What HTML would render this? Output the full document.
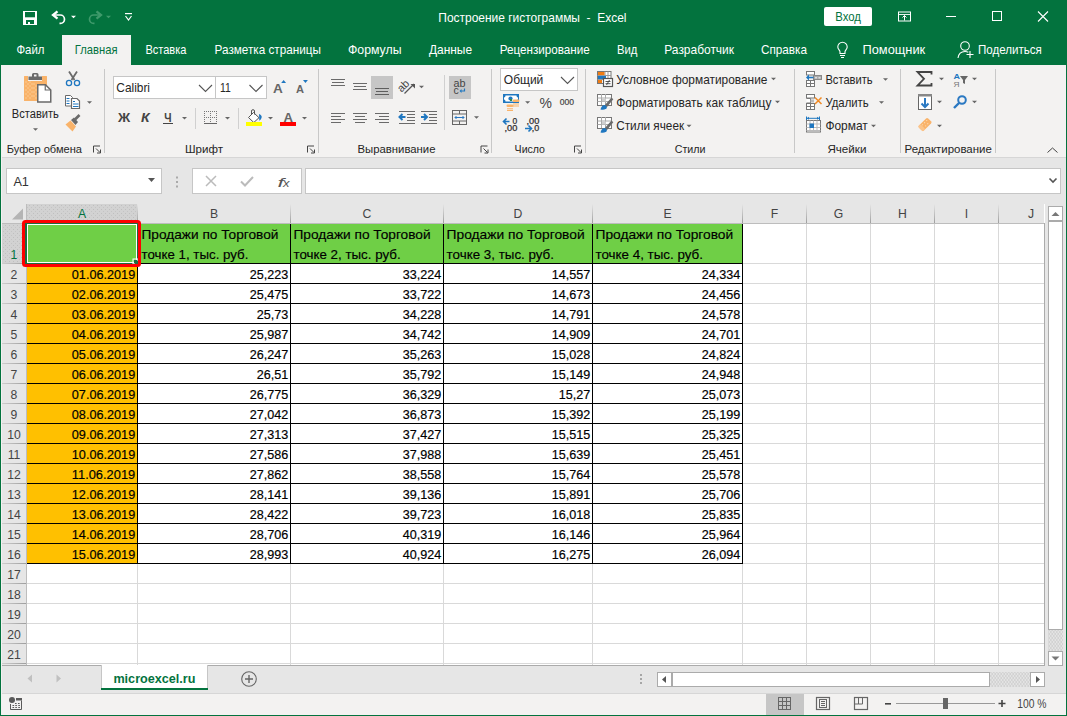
<!DOCTYPE html>
<html><head><meta charset="utf-8"><title>Excel</title>
<style>html,body{margin:0;padding:0;background:#fff;overflow:hidden}svg{display:block}text{font-family:"Liberation Sans",sans-serif}</style>
</head><body>
<svg width="1067" height="716" viewBox="0 0 1067 716" shape-rendering="auto">
<defs>
<linearGradient id="hsep" x1="0" y1="0" x2="0" y2="1"><stop offset="0" stop-color="#e6e6e6"/><stop offset="1" stop-color="#9e9e9e"/></linearGradient>
<linearGradient id="vsep" x1="0" y1="0" x2="1" y2="0"><stop offset="0" stop-color="#d0d0d0"/><stop offset="1" stop-color="#9e9e9e"/></linearGradient>
<pattern id="dots" width="4" height="4" patternUnits="userSpaceOnUse"><rect width="4" height="4" fill="#d2d2d2"/><rect x="1" y="1" width="1" height="1" fill="#bfbfbf"/><rect x="3" y="3" width="1" height="1" fill="#c4c4c4"/></pattern>
<pattern id="zig" width="6" height="4" patternUnits="userSpaceOnUse"><rect width="6" height="4" fill="#e3e3e3"/><path d="M0,0 l3,2 l-3,2 M3,0 l3,2 l-3,2" stroke="#d0d0d0" stroke-width="1" fill="none"/></pattern>
</defs>
<rect x="0" y="0" width="1067" height="65" fill="#03733e" />
<rect x="23" y="11" width="14" height="14" fill="#fff" />
<rect x="25" y="12" width="10" height="5.3" fill="#03733e" />
<rect x="26" y="20" width="8" height="4" fill="#03733e" />
<rect x="28" y="22" width="2" height="2" fill="#fff" />
<path d="M53.5,15 h6.8 a4.2,4.2 0 0 1 0,8.4 h-0.8" fill="none" stroke="#fff" stroke-width="1.7"/>
<path d="M57.5,11.3 L53,15 L57.5,18.7" fill="none" stroke="#fff" stroke-width="2.3" stroke-linejoin="miter"/>
<path d="M71.0,15.75 h5 l-2.5,2.5 z" fill="#fff"/>
<path d="M100.5,15 h-6.8 a4.2,4.2 0 0 0 0,8.4 h0.8" fill="none" stroke="#3f9a6b" stroke-width="1.7"/>
<path d="M96.5,11.3 L101,15 L96.5,18.7" fill="none" stroke="#3f9a6b" stroke-width="2.3" stroke-linejoin="miter"/>
<path d="M106.0,15.75 h5 l-2.5,2.5 z" fill="#3f9a6b"/>
<rect x="125" y="13" width="7" height="1.2" fill="#fff"/>
<path d="M125.5,16 l3,4 l3,-4" fill="none" stroke="#fff" stroke-width="1.2"/>
<text x="438.3" y="22" font-size="12.2" fill="#fff" font-weight="normal" font-family="Liberation Sans" textLength="188.2" lengthAdjust="spacingAndGlyphs" xml:space="preserve">Построение гистограммы  -  Excel</text>
<rect x="824" y="7" width="48" height="19" rx="2" fill="#fff"/>
<text x="835.3" y="21.2" font-size="12.2" fill="#03733e" font-weight="normal" font-family="Liberation Sans" textLength="25.7" lengthAdjust="spacingAndGlyphs" >Вход</text>
<rect x="898.5" y="12" width="12" height="9" fill="none" stroke="#fff" stroke-width="1"/>
<rect x="898.5" y="14" width="12" height="0.9" fill="#fff"/>
<path d="M904.5,20.5 v-5 M902.5,17.5 l2,-2 l2,2" fill="none" stroke="#fff" stroke-width="1"/>
<rect x="946" y="16" width="10" height="1" fill="#fff"/>
<rect x="992.5" y="11.5" width="9" height="9" fill="none" stroke="#fff" stroke-width="1"/>
<path d="M1038,11.5 l10,10 M1048,11.5 l-10,10" fill="none" stroke="#fff" stroke-width="1.1"/>
<rect x="62" y="35" width="69" height="30" fill="#f3f2f1" />
<text x="16.4" y="54" font-size="12.2" fill="#fff" font-weight="normal" font-family="Liberation Sans" textLength="28.0" lengthAdjust="spacingAndGlyphs" >Файл</text>
<text x="74.8" y="54" font-size="12.2" fill="#03733e" font-weight="normal" font-family="Liberation Sans" textLength="42.7" lengthAdjust="spacingAndGlyphs" >Главная</text>
<text x="145.4" y="54" font-size="12.2" fill="#fff" font-weight="normal" font-family="Liberation Sans" textLength="41.0" lengthAdjust="spacingAndGlyphs" >Вставка</text>
<text x="214.6" y="54" font-size="12.2" fill="#fff" font-weight="normal" font-family="Liberation Sans" textLength="106.2" lengthAdjust="spacingAndGlyphs" >Разметка страницы</text>
<text x="348" y="54" font-size="12.2" fill="#fff" font-weight="normal" font-family="Liberation Sans" textLength="53.5" lengthAdjust="spacingAndGlyphs" >Формулы</text>
<text x="429" y="54" font-size="12.2" fill="#fff" font-weight="normal" font-family="Liberation Sans" textLength="43.0" lengthAdjust="spacingAndGlyphs" >Данные</text>
<text x="499.7" y="54" font-size="12.2" fill="#fff" font-weight="normal" font-family="Liberation Sans" textLength="90.1" lengthAdjust="spacingAndGlyphs" >Рецензирование</text>
<text x="617" y="54" font-size="12.2" fill="#fff" font-weight="normal" font-family="Liberation Sans" textLength="20.4" lengthAdjust="spacingAndGlyphs" >Вид</text>
<text x="664.3" y="54" font-size="12.2" fill="#fff" font-weight="normal" font-family="Liberation Sans" textLength="69.7" lengthAdjust="spacingAndGlyphs" >Разработчик</text>
<text x="761" y="54" font-size="12.2" fill="#fff" font-weight="normal" font-family="Liberation Sans" textLength="46.0" lengthAdjust="spacingAndGlyphs" >Справка</text>
<text x="862.5" y="54" font-size="12.2" fill="#fff" font-weight="normal" font-family="Liberation Sans" textLength="62.7" lengthAdjust="spacingAndGlyphs" >Помощник</text>
<text x="978" y="54" font-size="12.2" fill="#fff" font-weight="normal" font-family="Liberation Sans" textLength="63.8" lengthAdjust="spacingAndGlyphs" >Поделиться</text>
<path d="M840,53.5 v-1.8 c0,-1.5 -2.2,-2.5 -2.2,-4.7 a4.7,4.7 0 0 1 9.4,0 c0,2.2 -2.2,3.2 -2.2,4.7 v1.8 z" fill="none" stroke="#fff" stroke-width="1.1"/>
<path d="M840,55.5 h5 M841,57.5 h3" stroke="#fff" stroke-width="1.1"/>
<circle cx="965" cy="46" r="4.3" fill="none" stroke="#fff" stroke-width="1.1"/>
<path d="M958,58 c0.5,-4 3,-6.5 7,-6.5 c1.3,0 2.4,0.3 3.3,0.8" fill="none" stroke="#fff" stroke-width="1.1"/>
<path d="M970,51 v7 M966.5,54.5 h7" stroke="#fff" stroke-width="1.1"/>
<rect x="1" y="65" width="1065" height="92" fill="#f3f2f1" />
<rect x="1" y="157" width="1065" height="1" fill="#d6d6d6" />
<rect x="104" y="69" width="1" height="84" fill="#c8c8c8" />
<rect x="318" y="69" width="1" height="84" fill="#c8c8c8" />
<rect x="491" y="69" width="1" height="84" fill="#c8c8c8" />
<rect x="585" y="69" width="1" height="84" fill="#c8c8c8" />
<rect x="794" y="69" width="1" height="84" fill="#c8c8c8" />
<rect x="900" y="69" width="1" height="84" fill="#c8c8c8" />
<rect x="995" y="69" width="1" height="84" fill="#c8c8c8" />
<text x="6.7" y="153" font-size="11.7" fill="#262626" font-weight="normal" font-family="Liberation Sans" textLength="75.3" lengthAdjust="spacingAndGlyphs" >Буфер обмена</text>
<text x="185" y="153" font-size="11.7" fill="#262626" font-weight="normal" font-family="Liberation Sans" textLength="38.0" lengthAdjust="spacingAndGlyphs" >Шрифт</text>
<text x="357.5" y="153" font-size="11.7" fill="#262626" font-weight="normal" font-family="Liberation Sans" textLength="78.0" lengthAdjust="spacingAndGlyphs" >Выравнивание</text>
<text x="514.6" y="153" font-size="11.7" fill="#262626" font-weight="normal" font-family="Liberation Sans" textLength="30.4" lengthAdjust="spacingAndGlyphs" >Число</text>
<text x="674.7" y="153" font-size="11.7" fill="#262626" font-weight="normal" font-family="Liberation Sans" textLength="30.8" lengthAdjust="spacingAndGlyphs" >Стили</text>
<text x="827.4" y="153" font-size="11.7" fill="#262626" font-weight="normal" font-family="Liberation Sans" textLength="39.0" lengthAdjust="spacingAndGlyphs" >Ячейки</text>
<text x="904.6" y="153" font-size="11.7" fill="#262626" font-weight="normal" font-family="Liberation Sans" textLength="87.2" lengthAdjust="spacingAndGlyphs" >Редактирование</text>
<path d="M93.5,152.5 v-6.5 h6.5" fill="none" stroke="#444" stroke-width="1"/>
<path d="M96,148.5 l4,4 M100.5,149.5 v3.5 h-3.5" fill="none" stroke="#444" stroke-width="1"/>
<path d="M307.5,152.5 v-6.5 h6.5" fill="none" stroke="#444" stroke-width="1"/>
<path d="M310,148.5 l4,4 M314.5,149.5 v3.5 h-3.5" fill="none" stroke="#444" stroke-width="1"/>
<path d="M481.0,152.5 v-6.5 h6.5" fill="none" stroke="#444" stroke-width="1"/>
<path d="M483.5,148.5 l4,4 M488.0,149.5 v3.5 h-3.5" fill="none" stroke="#444" stroke-width="1"/>
<path d="M574.5,152.5 v-6.5 h6.5" fill="none" stroke="#444" stroke-width="1"/>
<path d="M577,148.5 l4,4 M581.5,149.5 v3.5 h-3.5" fill="none" stroke="#444" stroke-width="1"/>
<path d="M1047.5,152.5 l5,-4.5 l5,4.5" fill="none" stroke="#444" stroke-width="1"/>
<path d="M24,76 h4 v5 h14 v-5 h4.5 q0.5,0 0.5,0.5 v24 q0,0.5 -0.5,0.5 h-22 q-0.5,0 -0.5,-0.5 v-24 q0,-0.5 0.5,-0.5 z" fill="#f9b36a"/>
<rect x="25.5" y="81.5" width="1" height="1" fill="#fde0b8"/>
<rect x="27.5" y="83.5" width="1" height="1" fill="#fde0b8"/>
<rect x="25.5" y="85.5" width="1" height="1" fill="#fde0b8"/>
<rect x="27.5" y="87.5" width="1" height="1" fill="#fde0b8"/>
<rect x="25.5" y="89.5" width="1" height="1" fill="#fde0b8"/>
<rect x="27.5" y="91.5" width="1" height="1" fill="#fde0b8"/>
<rect x="25.5" y="93.5" width="1" height="1" fill="#fde0b8"/>
<rect x="27.5" y="95.5" width="1" height="1" fill="#fde0b8"/>
<rect x="25.5" y="97.5" width="1" height="1" fill="#fde0b8"/>
<rect x="29.5" y="81.5" width="1" height="1" fill="#fde0b8"/>
<rect x="31.5" y="83.5" width="1" height="1" fill="#fde0b8"/>
<rect x="29.5" y="85.5" width="1" height="1" fill="#fde0b8"/>
<rect x="31.5" y="87.5" width="1" height="1" fill="#fde0b8"/>
<rect x="29.5" y="89.5" width="1" height="1" fill="#fde0b8"/>
<rect x="31.5" y="91.5" width="1" height="1" fill="#fde0b8"/>
<rect x="29.5" y="93.5" width="1" height="1" fill="#fde0b8"/>
<rect x="31.5" y="95.5" width="1" height="1" fill="#fde0b8"/>
<rect x="29.5" y="97.5" width="1" height="1" fill="#fde0b8"/>
<rect x="33.5" y="83.5" width="1" height="1" fill="#fde0b8"/>
<rect x="33.5" y="87.5" width="1" height="1" fill="#fde0b8"/>
<rect x="33.5" y="91.5" width="1" height="1" fill="#fde0b8"/>
<rect x="33.5" y="95.5" width="1" height="1" fill="#fde0b8"/>
<rect x="35.5" y="85.5" width="1" height="1" fill="#fde0b8"/>
<rect x="35.5" y="89.5" width="1" height="1" fill="#fde0b8"/>
<rect x="35.5" y="93.5" width="1" height="1" fill="#fde0b8"/>
<rect x="35.5" y="97.5" width="1" height="1" fill="#fde0b8"/>
<path d="M28.5,76.5 h3.5 v-2 q0,-1.5 1.5,-1.5 h3.5 q1.5,0 1.5,1.5 v2 h3.5 v3.5 h-13.5 z" fill="#6a6a6a"/>
<rect x="34" y="74.5" width="2.5" height="2" fill="#f3f2f1"/>
<path d="M37.75,84.75 h7.75 l5.25,5.25 v12 h-13 z" fill="#fff" stroke="#6a6a6a" stroke-width="1.5"/>
<path d="M45.25,84.75 v5.25 h5.5" fill="none" stroke="#6a6a6a" stroke-width="1.2"/>
<text x="11.8" y="118" font-size="12.3" fill="#262626" font-weight="normal" font-family="Liberation Sans" textLength="47.1" lengthAdjust="spacingAndGlyphs" >Вставить</text>
<path d="M33.0,128.25 h5 l-2.5,2.5 z" fill="#666666"/>
<path d="M69,71.5 l5.5,8.5 M77,71.5 l-5.5,8.5" stroke="#6a6a6a" stroke-width="1.8"/>
<circle cx="69" cy="83" r="2.6" fill="none" stroke="#1f77c0" stroke-width="1.3"/>
<circle cx="77" cy="83" r="2.6" fill="none" stroke="#1f77c0" stroke-width="1.3"/>
<path d="M65.5,95.5 h5 l2,2 v8.5 h-7 z" fill="#fff" stroke="#6a6a6a" stroke-width="1"/>
<path d="M71.5,98.5 h5.5 l2.5,2.5 v7.5 h-8 z" fill="#fff" stroke="#6a6a6a" stroke-width="1.2"/>
<path d="M66.5,98.5 h3 M66.5,101 h3 M66.5,103.5 h3 M73,101.5 h2 M73,104 h5.5 M73,106.5 h5.5" stroke="#1f77c0" stroke-width="1"/>
<path d="M87.0,101.25 h5 l-2.5,2.5 z" fill="#666666"/>
<path d="M65.5,124.5 l5,-4 l5.5,6 l-3.5,5 z" fill="#f9b36a"/>
<path d="M71,120 l3,-2.5 l4,4.5 l-2.5,3 z" fill="#6a6a6a"/>
<path d="M75,119.5 l4.5,-4.5" stroke="#6a6a6a" stroke-width="2.6"/>
<rect x="113.5" y="76.5" width="102" height="22" fill="#fff" stroke="#c6c6c6" stroke-width="1"/>
<rect x="215.5" y="76.5" width="51" height="22" fill="#fff" stroke="#c6c6c6" stroke-width="1"/>
<text x="116.3" y="92" font-size="12.4" fill="#262626" font-weight="normal" font-family="Liberation Sans" textLength="33.7" lengthAdjust="spacingAndGlyphs" >Calibri</text>
<text x="220" y="92" font-size="12.4" fill="#262626" font-weight="normal" font-family="Liberation Sans" textLength="10.8" lengthAdjust="spacingAndGlyphs" >11</text>
<path d="M199,85 l6.5,6.5 l6.5,-6.5" fill="none" stroke="#555" stroke-width="1.1"/>
<path d="M249.5,85 l6.5,6.5 l6.5,-6.5" fill="none" stroke="#555" stroke-width="1.1"/>
<text x="273" y="93" font-size="13.5" fill="#666" font-weight="bold" font-family="Liberation Sans" textLength="9.8" lengthAdjust="spacingAndGlyphs" >A</text>
<path d="M281.2,83 l2.45,-3 l2.45,3 z" fill="#1f77c0"/>
<text x="295.9" y="93" font-size="11" fill="#666" font-weight="bold" font-family="Liberation Sans" textLength="8.0" lengthAdjust="spacingAndGlyphs" >A</text>
<path d="M303,80 l2.45,3 l2.45,-3 z" fill="#1f77c0"/>
<text x="117.9" y="122" font-size="12.5" fill="#444" font-weight="bold" font-family="Liberation Sans" textLength="12.2" lengthAdjust="spacingAndGlyphs" >Ж</text>
<text x="141" y="122" font-size="12.5" fill="#444" font-weight="bold" font-family="Liberation Sans" textLength="8.6" lengthAdjust="spacingAndGlyphs" font-style="italic">К</text>
<text x="164.2" y="122" font-size="12.5" fill="#444" font-weight="bold" font-family="Liberation Sans" textLength="7.3" lengthAdjust="spacingAndGlyphs" >Ч</text>
<rect x="163" y="123" width="10" height="1" fill="#444" />
<path d="M182.0,117.05 h5 l-2.5,2.5 z" fill="#666666"/>
<rect x="195" y="108" width="1" height="21" fill="#d0d0d0" />
<rect x="204" y="111" width="1" height="1" fill="#777" />
<rect x="206" y="111" width="1" height="1" fill="#777" />
<rect x="208" y="111" width="1" height="1" fill="#777" />
<rect x="210" y="111" width="1" height="1" fill="#777" />
<rect x="212" y="111" width="1" height="1" fill="#777" />
<rect x="214" y="111" width="1" height="1" fill="#777" />
<rect x="216" y="111" width="1" height="1" fill="#777" />
<rect x="204" y="117" width="1" height="1" fill="#777" />
<rect x="206" y="117" width="1" height="1" fill="#777" />
<rect x="208" y="117" width="1" height="1" fill="#777" />
<rect x="210" y="117" width="1" height="1" fill="#777" />
<rect x="212" y="117" width="1" height="1" fill="#777" />
<rect x="214" y="117" width="1" height="1" fill="#777" />
<rect x="216" y="117" width="1" height="1" fill="#777" />
<rect x="204" y="113" width="1" height="1" fill="#777" />
<rect x="204" y="115" width="1" height="1" fill="#777" />
<rect x="204" y="117" width="1" height="1" fill="#777" />
<rect x="204" y="119" width="1" height="1" fill="#777" />
<rect x="204" y="121" width="1" height="1" fill="#777" />
<rect x="210" y="113" width="1" height="1" fill="#777" />
<rect x="210" y="115" width="1" height="1" fill="#777" />
<rect x="210" y="117" width="1" height="1" fill="#777" />
<rect x="210" y="119" width="1" height="1" fill="#777" />
<rect x="210" y="121" width="1" height="1" fill="#777" />
<rect x="216" y="113" width="1" height="1" fill="#777" />
<rect x="216" y="115" width="1" height="1" fill="#777" />
<rect x="216" y="117" width="1" height="1" fill="#777" />
<rect x="216" y="119" width="1" height="1" fill="#777" />
<rect x="216" y="121" width="1" height="1" fill="#777" />
<rect x="204" y="123" width="13" height="1" fill="#666" />
<path d="M225.0,117.05 h5 l-2.5,2.5 z" fill="#666666"/>
<rect x="238" y="108" width="1" height="21" fill="#d0d0d0" />
<path d="M248.5,117.5 l5,-5 l5.5,5.2 l-5.2,4.8 z" fill="#fff" stroke="#555" stroke-width="1"/>
<path d="M251.5,115 v-4 q0,-1.3 1.5,-1.3 q1.5,0 1.5,1.3 v3.5" fill="none" stroke="#555" stroke-width="1"/>
<path d="M259,114 q3.5,1.5 2.5,4 q-0.8,2 -2.2,2.8 z" fill="#1f77c0"/>
<rect x="246" y="122" width="16" height="4" fill="#ffff00" />
<path d="M268.0,117.05 h5 l-2.5,2.5 z" fill="#666666"/>
<text x="283.5" y="121.8" font-size="13" fill="#666" font-weight="bold" font-family="Liberation Sans" textLength="9.5" lengthAdjust="spacingAndGlyphs" >A</text>
<rect x="280" y="122" width="16" height="4" fill="#ff0000" />
<path d="M302.0,117.05 h5 l-2.5,2.5 z" fill="#666666"/>
<rect x="331" y="79" width="14" height="1" fill="#6a6a6a" />
<rect x="331" y="85" width="14" height="1" fill="#6a6a6a" />
<rect x="332" y="82" width="12" height="1" fill="#6a6a6a" />
<rect x="353" y="83" width="14" height="1" fill="#6a6a6a" />
<rect x="353" y="89" width="14" height="1" fill="#6a6a6a" />
<rect x="354" y="86" width="12" height="1" fill="#6a6a6a" />
<rect x="371" y="76" width="22" height="23" fill="#c6c6c6" />
<rect x="375" y="88" width="14" height="1" fill="#5e5e5e" />
<rect x="375" y="94" width="14" height="1" fill="#5e5e5e" />
<rect x="376" y="91" width="12" height="1" fill="#5e5e5e" />
<text x="397.5" y="89" font-size="11" fill="#444" font-family="Liberation Sans" transform="rotate(-45 404 86)">ab</text>
<path d="M404.5,93.5 l9.5,-9.5" fill="none" stroke="#555" stroke-width="1.2"/>
<path d="M410.5,84 h4.5 v4.5 z" fill="#555"/>
<path d="M419.0,85.75 h5 l-2.5,2.5 z" fill="#666666"/>
<rect x="444" y="75" width="1" height="55" fill="#d0d0d0" />
<rect x="449" y="76" width="22" height="23" fill="#c6c6c6" />
<text x="453.5" y="86.5" font-size="10.5" fill="#444" font-family="Liberation Sans" textLength="12" lengthAdjust="spacingAndGlyphs">ab</text>
<text x="453.5" y="94" font-size="10.5" fill="#444" font-family="Liberation Sans">c</text>
<path d="M464.5,88.5 v2.5 h-3.5" fill="none" stroke="#1f77c0" stroke-width="1.2"/><path d="M461.5,89 l-2,2 l2,2 z" fill="#1f77c0"/>
<rect x="331" y="113" width="14" height="1" fill="#6a6a6a" />
<rect x="353" y="113" width="14" height="1" fill="#6a6a6a" />
<rect x="375" y="113" width="14" height="1" fill="#6a6a6a" />
<rect x="331" y="119" width="14" height="1" fill="#6a6a6a" />
<rect x="353" y="119" width="14" height="1" fill="#6a6a6a" />
<rect x="375" y="119" width="14" height="1" fill="#6a6a6a" />
<rect x="331" y="116" width="10" height="1" fill="#6a6a6a" />
<rect x="355" y="116" width="10" height="1" fill="#6a6a6a" />
<rect x="379" y="116" width="10" height="1" fill="#6a6a6a" />
<rect x="331" y="122" width="10" height="1" fill="#6a6a6a" />
<rect x="355" y="122" width="10" height="1" fill="#6a6a6a" />
<rect x="379" y="122" width="10" height="1" fill="#6a6a6a" />
<rect x="399" y="111" width="16" height="1" fill="#6a6a6a" />
<rect x="421" y="111" width="16" height="1" fill="#6a6a6a" />
<rect x="399" y="123" width="16" height="1" fill="#6a6a6a" />
<rect x="421" y="123" width="16" height="1" fill="#6a6a6a" />
<rect x="407" y="114" width="8" height="1" fill="#6a6a6a" />
<rect x="429" y="114" width="8" height="1" fill="#6a6a6a" />
<rect x="407" y="117" width="8" height="1" fill="#6a6a6a" />
<rect x="429" y="117" width="8" height="1" fill="#6a6a6a" />
<rect x="407" y="120" width="8" height="1" fill="#6a6a6a" />
<rect x="429" y="120" width="8" height="1" fill="#6a6a6a" />
<path d="M399.5,117 h6 M402.5,114 l-3,3 l3,3" fill="none" stroke="#1f77c0" stroke-width="2"/>
<path d="M421,117 h6.5 M424,114 l3,3 l-3,3" fill="none" stroke="#1f77c0" stroke-width="2"/>
<rect x="452.5" y="110.5" width="14" height="14" fill="none" stroke="#666" stroke-width="1"/>
<path d="M452.5,114 h14 M452.5,121 h14 M459.5,110.5 v3.5 M459.5,121 v3.5" stroke="#666" stroke-width="1"/>
<path d="M455,117.5 h9 M456.5,116 l-1.5,1.5 l1.5,1.5 M462.5,116 l1.5,1.5 l-1.5,1.5" fill="none" stroke="#2b79c2" stroke-width="1"/>
<path d="M474.0,116.25 h5 l-2.5,2.5 z" fill="#666666"/>
<rect x="500.5" y="68.5" width="77" height="22" fill="#fff" stroke="#c6c6c6" stroke-width="1"/>
<text x="503.8" y="84" font-size="12.4" fill="#262626" font-weight="normal" font-family="Liberation Sans" textLength="39.5" lengthAdjust="spacingAndGlyphs" >Общий</text>
<path d="M561,77 l6.5,6.5 l6.5,-6.5" fill="none" stroke="#555" stroke-width="1.1"/>
<rect x="503" y="94" width="16" height="9" fill="#1f77c0"/>
<path d="M505.5,95.5 h11 q0,2 1.5,2 v2 q-1.5,0 -1.5,2 h-11 q0,-2 -1.5,-2 v-2 q1.5,0 1.5,-2 z" fill="#fff"/>
<circle cx="510.5" cy="98.5" r="2.1" fill="#1f77c0"/>
<rect x="510" y="99" width="2" height="2" fill="#2e8b57" />
<rect x="512.5" y="99.5" width="7" height="2.6" rx="1.3" fill="#f9b36a"/>
<rect x="513" y="103.5" width="6" height="1" fill="#f9b36a" />
<rect x="513" y="105.5" width="6" height="1" fill="#f9b36a" />
<rect x="506.5" y="104.5" width="7" height="2.6" rx="1.3" fill="#f9b36a"/>
<rect x="507" y="108.3" width="6" height="1" fill="#f9b36a" />
<rect x="507" y="110" width="6" height="1" fill="#f9b36a" />
<path d="M525.1,101.15 h5 l-2.5,2.5 z" fill="#666666"/>
<text x="539.6" y="108" font-size="14" fill="#444" font-weight="normal" font-family="Liberation Sans" textLength="12.4" lengthAdjust="spacingAndGlyphs" >%</text>
<text x="559.8" y="104.8" font-size="9" fill="#444" font-weight="normal" font-family="Liberation Sans" textLength="14.3" lengthAdjust="spacingAndGlyphs" stroke="#444" stroke-width="0.2" >000</text>
<path d="M503.5,121.5 h6 M506.5,118.5 l-3,3 l3,3" fill="none" stroke="#1f77c0" stroke-width="1.6"/>
<text x="512.6" y="123.6" font-size="8.2" fill="#333" font-weight="normal" font-family="Liberation Sans" textLength="4.7" lengthAdjust="spacingAndGlyphs" stroke="#333" stroke-width="0.25" >0</text>
<text x="504.5" y="131" font-size="8.2" fill="#333" font-weight="normal" font-family="Liberation Sans" textLength="12.8" lengthAdjust="spacingAndGlyphs" stroke="#333" stroke-width="0.25" >,00</text>
<text x="526.5" y="123.6" font-size="8.2" fill="#333" font-weight="normal" font-family="Liberation Sans" textLength="12.8" lengthAdjust="spacingAndGlyphs" stroke="#333" stroke-width="0.25" >,00</text>
<path d="M525,128.5 h6 M528.5,125.5 l3,3 l-3,3" fill="none" stroke="#1f77c0" stroke-width="1.6"/>
<text x="531.8" y="131" font-size="8.2" fill="#333" font-weight="normal" font-family="Liberation Sans" textLength="7.5" lengthAdjust="spacingAndGlyphs" stroke="#333" stroke-width="0.25" >,0</text>
<rect x="597.5" y="71.5" width="13.5" height="12" fill="#fff" stroke="#777" stroke-width="1"/>
<path d="M597.5,75.5 h13.5 M597.5,79.5 h13.5 M605,71.5 v12 M608,71.5 v12" stroke="#999" stroke-width="1"/>
<rect x="598" y="72" width="6.5" height="3" fill="#f07c14" />
<rect x="598" y="76" width="8" height="3" fill="#1f77c0" />
<rect x="598" y="80" width="4" height="3" fill="#f07c14" />
<rect x="603.5" y="78.5" width="9" height="8" fill="#fff" stroke="#555" stroke-width="1.2"/>
<path d="M605.5,81.5 h5 M605.5,83.7 h5 M609.5,80 l-3,5" stroke="#444" stroke-width="0.9"/>
<text x="616.2" y="84" font-size="12.4" fill="#262626" font-weight="normal" font-family="Liberation Sans" textLength="151.2" lengthAdjust="spacingAndGlyphs" >Условное форматирование</text>
<path d="M771.0,77.75 h5 l-2.5,2.5 z" fill="#666666"/>
<rect x="597.5" y="94.5" width="14" height="11" fill="#fff" stroke="#777" stroke-width="1"/>
<path d="M597.5,98 h14 M597.5,101.5 h14 M601.5,94 v11 M605.5,94 v11" stroke="#aaa" stroke-width="1"/>
<rect x="602" y="98.5" width="4" height="3" fill="#cfcfcf" />
<path d="M604.5,105.5 l7,-8 l1.8,1.8 l-6.5,8 z" fill="#6a6a6a"/>
<path d="M600.5,109.5 c0.5,-2.5 2,-4.5 4.5,-4.5 l2,2 c-0.5,2.5 -3,3 -6.5,2.5 z" fill="#1f77c0"/>
<text x="616.2" y="107" font-size="12.4" fill="#262626" font-weight="normal" font-family="Liberation Sans" textLength="155.2" lengthAdjust="spacingAndGlyphs" >Форматировать как таблицу</text>
<path d="M775.0,100.75 h5 l-2.5,2.5 z" fill="#666666"/>
<rect x="597.5" y="117.5" width="14" height="11" fill="#fff" stroke="#777" stroke-width="1"/>
<path d="M597.5,121 h14 M597.5,124.5 h14 M601.5,117 v11 M605.5,117 v11" stroke="#aaa" stroke-width="1"/>
<rect x="602" y="121.5" width="4" height="3" fill="#cfcfcf" />
<path d="M604.5,128.5 l7,-8 l1.8,1.8 l-6.5,8 z" fill="#6a6a6a"/>
<path d="M600.5,132.5 c0.5,-2.5 2,-4.5 4.5,-4.5 l2,2 c-0.5,2.5 -3,3 -6.5,2.5 z" fill="#1f77c0"/>
<text x="616.2" y="130" font-size="12.4" fill="#262626" font-weight="normal" font-family="Liberation Sans" textLength="67.9" lengthAdjust="spacingAndGlyphs" >Стили ячеек</text>
<path d="M686.5,124.75 h5 l-2.5,2.5 z" fill="#666666"/>
<rect x="806.5" y="71.5" width="8" height="3.5" fill="#fff" stroke="#777" stroke-width="1"/>
<rect x="806.5" y="80.5" width="8" height="6" fill="#fff" stroke="#777" stroke-width="1"/>
<path d="M806.5,83.5 h8 M810.5,80.5 v6" stroke="#777" stroke-width="1"/>
<rect x="813.5" y="75.5" width="8" height="4" fill="#aaa" stroke="#888" stroke-width="1"/>
<rect x="815" y="77" width="2" height="1.5" fill="#ddd"/><rect x="818.5" y="77" width="2" height="1.5" fill="#ddd"/>
<path d="M807.5,77.5 h6" stroke="#1f77c0" stroke-width="1.6"/><path d="M806,77.5 l3,-3 v6 z" fill="#1f77c0"/>
<rect x="806.5" y="94.5" width="8" height="3.5" fill="#fff" stroke="#777" stroke-width="1"/>
<rect x="806.5" y="103.5" width="8" height="6" fill="#fff" stroke="#777" stroke-width="1"/>
<path d="M806.5,106.5 h8 M810.5,103.5 v6" stroke="#777" stroke-width="1"/>
<path d="M806.5,98.5 h4 v4.5 h-4" fill="#fff" stroke="#777" stroke-width="1"/>
<rect x="810.5" y="99.5" width="3.5" height="3" fill="#bbb"/>
<path d="M815,97.5 l6.5,6.5 M821.5,97.5 l-6.5,6.5" stroke="#f08a24" stroke-width="1.5"/>
<rect x="806.5" y="120.5" width="14" height="11.5" fill="#fff" stroke="#777" stroke-width="1"/>
<path d="M806.5,124 h14 M806.5,127.5 h14 M806.5,130.5 h14 M810,120.5 v11.5 M813.5,120.5 v11.5 M817,120.5 v11.5" stroke="#bbb" stroke-width="1"/>
<rect x="809.5" y="123.5" width="4.5" height="4.5" fill="#1f77c0" />
<path d="M806.5,116.5 v3.5 M819.5,116.5 v3.5 M807,118.3 h12" stroke="#1f77c0" stroke-width="1"/>
<path d="M807,118.3 l2,-1.5 v3 z M819,118.3 l-2,-1.5 v3 z" fill="#1f77c0"/>
<text x="825.4" y="84" font-size="12.4" fill="#262626" font-weight="normal" font-family="Liberation Sans" textLength="47.3" lengthAdjust="spacingAndGlyphs" >Вставить</text>
<path d="M883.0,78.25 h5 l-2.5,2.5 z" fill="#666666"/>
<text x="825.4" y="107" font-size="12.4" fill="#262626" font-weight="normal" font-family="Liberation Sans" textLength="43.3" lengthAdjust="spacingAndGlyphs" >Удалить</text>
<path d="M879.0,101.25 h5 l-2.5,2.5 z" fill="#666666"/>
<text x="825.4" y="130" font-size="12.4" fill="#262626" font-weight="normal" font-family="Liberation Sans" textLength="42.4" lengthAdjust="spacingAndGlyphs" >Формат</text>
<path d="M871.0,124.75 h5 l-2.5,2.5 z" fill="#666666"/>
<path d="M931.5,74.5 v-2.5 h-14 l6.5,6.8 l-6.5,6.7 h14 v-2.5" fill="none" stroke="#444" stroke-width="1.8" stroke-linejoin="miter"/>
<path d="M939.0,77.75 h5 l-2.5,2.5 z" fill="#666666"/>
<text x="953.5" y="78.5" font-size="8" fill="#1f77c0" font-weight="bold" font-family="Liberation Sans" textLength="6.5" lengthAdjust="spacingAndGlyphs" >A</text>
<text x="953.5" y="86.5" font-size="8" fill="#777" font-weight="normal" font-family="Liberation Sans" textLength="6.0" lengthAdjust="spacingAndGlyphs" >Я</text>
<path d="M960,76 h8 l-3,4 v4 l-2,-1 v-3 z" fill="#666"/>
<path d="M972.0,77.75 h5 l-2.5,2.5 z" fill="#666666"/>
<rect x="918.5" y="94.5" width="13" height="15" fill="#fff" stroke="#666" stroke-width="1"/>
<rect x="918" y="94" width="14" height="2.5" fill="#888" />
<path d="M925,98 v9 M921.5,103.5 l3.5,3.5 l3.5,-3.5" fill="none" stroke="#2b79c2" stroke-width="2"/>
<path d="M937.0,100.75 h5 l-2.5,2.5 z" fill="#666666"/>
<circle cx="962" cy="100" r="3.8" fill="none" stroke="#2b79c2" stroke-width="2"/>
<path d="M959,103 l-5,5" stroke="#2b79c2" stroke-width="2.4"/>
<path d="M972.0,100.75 h5 l-2.5,2.5 z" fill="#666666"/>
<g transform="rotate(-45 925 124.5)"><rect x="918.5" y="121" width="13" height="7" rx="1.5" fill="#f9b36a"/><rect x="918.5" y="121" width="3.5" height="7" rx="1" fill="#fbc58c"/><rect x="922.5" y="122.5" width="1" height="1" fill="#fde3c3"/><rect x="925.5" y="122.5" width="1" height="1" fill="#fde3c3"/><rect x="928.5" y="122.5" width="1" height="1" fill="#fde3c3"/><rect x="924" y="125.5" width="1" height="1" fill="#fde3c3"/><rect x="927" y="125.5" width="1" height="1" fill="#fde3c3"/></g>
<path d="M937.0,124.75 h5 l-2.5,2.5 z" fill="#666666"/>
<rect x="1" y="158" width="1065" height="46" fill="#e6e6e6" />
<rect x="6.5" y="168.5" width="155" height="25" fill="#fff" stroke="#c6c6c6" stroke-width="1"/>
<text x="13.4" y="186" font-size="12.4" fill="#333" font-weight="normal" font-family="Liberation Sans" textLength="15.5" lengthAdjust="spacingAndGlyphs" >A1</text>
<path d="M148,178 h7 l-3.5,4 z" fill="#555"/>
<rect x="176" y="176.5" width="2" height="2" fill="#aaa" />
<rect x="176" y="181" width="2" height="2" fill="#aaa" />
<rect x="176" y="185.5" width="2" height="2" fill="#aaa" />
<rect x="192.5" y="168.5" width="109" height="25" fill="#fff" stroke="#c6c6c6" stroke-width="1"/>
<path d="M206,176 l10,10 M216,176 l-10,10" stroke="#bbb" stroke-width="1.5"/>
<path d="M241,181.5 l4,4 l8,-8.5" fill="none" stroke="#bbb" stroke-width="2"/>
<text x="277.5" y="186.5" font-size="13.5" fill="#555" font-weight="normal" font-family="Liberation Serif" textLength="6.5" lengthAdjust="spacingAndGlyphs" font-style="italic">f</text>
<text x="283" y="186.5" font-size="10" fill="#555" font-weight="normal" font-family="Liberation Serif" textLength="6.5" lengthAdjust="spacingAndGlyphs" font-style="italic">x</text>
<rect x="305.5" y="168.5" width="755" height="25" fill="#fff" stroke="#c6c6c6" stroke-width="1"/>
<path d="M1049.5,178.5 l3.5,3.5 l3.5,-3.5" fill="none" stroke="#555" stroke-width="1.6"/>
<rect x="1" y="204" width="1043" height="20" fill="#e6e6e6" />
<rect x="1" y="224" width="25" height="442" fill="#e6e6e6" />
<rect x="27" y="224" width="1017" height="442" fill="#fff" />
<rect x="137" y="224" width="1" height="441" fill="#d9d9d9" />
<rect x="290" y="224" width="1" height="441" fill="#d9d9d9" />
<rect x="443" y="224" width="1" height="441" fill="#d9d9d9" />
<rect x="592" y="224" width="1" height="441" fill="#d9d9d9" />
<rect x="742" y="224" width="1" height="441" fill="#d9d9d9" />
<rect x="806" y="224" width="1" height="441" fill="#d9d9d9" />
<rect x="870" y="224" width="1" height="441" fill="#d9d9d9" />
<rect x="934" y="224" width="1" height="441" fill="#d9d9d9" />
<rect x="998" y="224" width="1" height="441" fill="#d9d9d9" />
<rect x="27" y="263" width="1017" height="1" fill="#d9d9d9" />
<rect x="27" y="283" width="1017" height="1" fill="#d9d9d9" />
<rect x="27" y="303" width="1017" height="1" fill="#d9d9d9" />
<rect x="27" y="323" width="1017" height="1" fill="#d9d9d9" />
<rect x="27" y="343" width="1017" height="1" fill="#d9d9d9" />
<rect x="27" y="363" width="1017" height="1" fill="#d9d9d9" />
<rect x="27" y="383" width="1017" height="1" fill="#d9d9d9" />
<rect x="27" y="403" width="1017" height="1" fill="#d9d9d9" />
<rect x="27" y="423" width="1017" height="1" fill="#d9d9d9" />
<rect x="27" y="443" width="1017" height="1" fill="#d9d9d9" />
<rect x="27" y="463" width="1017" height="1" fill="#d9d9d9" />
<rect x="27" y="483" width="1017" height="1" fill="#d9d9d9" />
<rect x="27" y="503" width="1017" height="1" fill="#d9d9d9" />
<rect x="27" y="523" width="1017" height="1" fill="#d9d9d9" />
<rect x="27" y="543" width="1017" height="1" fill="#d9d9d9" />
<rect x="27" y="563" width="1017" height="1" fill="#d9d9d9" />
<rect x="27" y="583" width="1017" height="1" fill="#d9d9d9" />
<rect x="27" y="603" width="1017" height="1" fill="#d9d9d9" />
<rect x="27" y="623" width="1017" height="1" fill="#d9d9d9" />
<rect x="27" y="643" width="1017" height="1" fill="#d9d9d9" />
<rect x="27" y="663" width="1017" height="1" fill="#d9d9d9" />
<rect x="137" y="204" width="1" height="19" fill="url(#hsep)"/>
<rect x="290" y="204" width="1" height="19" fill="url(#hsep)"/>
<rect x="443" y="204" width="1" height="19" fill="url(#hsep)"/>
<rect x="592" y="204" width="1" height="19" fill="url(#hsep)"/>
<rect x="742" y="204" width="1" height="19" fill="url(#hsep)"/>
<rect x="806" y="204" width="1" height="19" fill="url(#hsep)"/>
<rect x="870" y="204" width="1" height="19" fill="url(#hsep)"/>
<rect x="934" y="204" width="1" height="19" fill="url(#hsep)"/>
<rect x="998" y="204" width="1" height="19" fill="url(#hsep)"/>
<rect x="1" y="223" width="1043" height="1" fill="#bdbdbd" />
<rect x="26" y="204" width="1" height="462" fill="#bdbdbd" />
<rect x="1" y="263" width="25" height="1" fill="url(#vsep)"/>
<rect x="1" y="283" width="25" height="1" fill="url(#vsep)"/>
<rect x="1" y="303" width="25" height="1" fill="url(#vsep)"/>
<rect x="1" y="323" width="25" height="1" fill="url(#vsep)"/>
<rect x="1" y="343" width="25" height="1" fill="url(#vsep)"/>
<rect x="1" y="363" width="25" height="1" fill="url(#vsep)"/>
<rect x="1" y="383" width="25" height="1" fill="url(#vsep)"/>
<rect x="1" y="403" width="25" height="1" fill="url(#vsep)"/>
<rect x="1" y="423" width="25" height="1" fill="url(#vsep)"/>
<rect x="1" y="443" width="25" height="1" fill="url(#vsep)"/>
<rect x="1" y="463" width="25" height="1" fill="url(#vsep)"/>
<rect x="1" y="483" width="25" height="1" fill="url(#vsep)"/>
<rect x="1" y="503" width="25" height="1" fill="url(#vsep)"/>
<rect x="1" y="523" width="25" height="1" fill="url(#vsep)"/>
<rect x="1" y="543" width="25" height="1" fill="url(#vsep)"/>
<rect x="1" y="563" width="25" height="1" fill="url(#vsep)"/>
<rect x="1" y="583" width="25" height="1" fill="url(#vsep)"/>
<rect x="1" y="603" width="25" height="1" fill="url(#vsep)"/>
<rect x="1" y="623" width="25" height="1" fill="url(#vsep)"/>
<rect x="1" y="643" width="25" height="1" fill="url(#vsep)"/>
<rect x="1" y="663" width="25" height="1" fill="url(#vsep)"/>
<path d="M12,219.5 L23,208.5 V219.5 Z" fill="#b4b4b4"/>
<rect x="27" y="204" width="110" height="19" fill="url(#dots)"/>
<rect x="1" y="224" width="25" height="39" fill="url(#dots)"/>
<text x="82.0" y="218" font-size="12.2" fill="#03733e" font-family="Liberation Sans" text-anchor="middle">A</text>
<text x="214.0" y="218" font-size="12.2" fill="#444" font-family="Liberation Sans" text-anchor="middle">B</text>
<text x="367.0" y="218" font-size="12.2" fill="#444" font-family="Liberation Sans" text-anchor="middle">C</text>
<text x="518.0" y="218" font-size="12.2" fill="#444" font-family="Liberation Sans" text-anchor="middle">D</text>
<text x="667.5" y="218" font-size="12.2" fill="#444" font-family="Liberation Sans" text-anchor="middle">E</text>
<text x="774.5" y="218" font-size="12.2" fill="#444" font-family="Liberation Sans" text-anchor="middle">F</text>
<text x="838.5" y="218" font-size="12.2" fill="#444" font-family="Liberation Sans" text-anchor="middle">G</text>
<text x="902.5" y="218" font-size="12.2" fill="#444" font-family="Liberation Sans" text-anchor="middle">H</text>
<text x="966.5" y="218" font-size="12.2" fill="#444" font-family="Liberation Sans" text-anchor="middle">I</text>
<text x="1031.0" y="218" font-size="12.2" fill="#444" font-family="Liberation Sans" text-anchor="middle">J</text>
<text x="14" y="259" font-size="12.2" fill="#03733e" font-family="Liberation Sans" text-anchor="middle">1</text>
<text x="14" y="279" font-size="12.2" fill="#444" font-family="Liberation Sans" text-anchor="middle">2</text>
<text x="14" y="299" font-size="12.2" fill="#444" font-family="Liberation Sans" text-anchor="middle">3</text>
<text x="14" y="319" font-size="12.2" fill="#444" font-family="Liberation Sans" text-anchor="middle">4</text>
<text x="14" y="339" font-size="12.2" fill="#444" font-family="Liberation Sans" text-anchor="middle">5</text>
<text x="14" y="359" font-size="12.2" fill="#444" font-family="Liberation Sans" text-anchor="middle">6</text>
<text x="14" y="379" font-size="12.2" fill="#444" font-family="Liberation Sans" text-anchor="middle">7</text>
<text x="14" y="399" font-size="12.2" fill="#444" font-family="Liberation Sans" text-anchor="middle">8</text>
<text x="14" y="419" font-size="12.2" fill="#444" font-family="Liberation Sans" text-anchor="middle">9</text>
<text x="14" y="439" font-size="12.2" fill="#444" font-family="Liberation Sans" text-anchor="middle">10</text>
<text x="14" y="459" font-size="12.2" fill="#444" font-family="Liberation Sans" text-anchor="middle">11</text>
<text x="14" y="479" font-size="12.2" fill="#444" font-family="Liberation Sans" text-anchor="middle">12</text>
<text x="14" y="499" font-size="12.2" fill="#444" font-family="Liberation Sans" text-anchor="middle">13</text>
<text x="14" y="519" font-size="12.2" fill="#444" font-family="Liberation Sans" text-anchor="middle">14</text>
<text x="14" y="539" font-size="12.2" fill="#444" font-family="Liberation Sans" text-anchor="middle">15</text>
<text x="14" y="559" font-size="12.2" fill="#444" font-family="Liberation Sans" text-anchor="middle">16</text>
<text x="14" y="579" font-size="12.2" fill="#444" font-family="Liberation Sans" text-anchor="middle">17</text>
<text x="14" y="599" font-size="12.2" fill="#444" font-family="Liberation Sans" text-anchor="middle">18</text>
<text x="14" y="619" font-size="12.2" fill="#444" font-family="Liberation Sans" text-anchor="middle">19</text>
<text x="14" y="639" font-size="12.2" fill="#444" font-family="Liberation Sans" text-anchor="middle">20</text>
<text x="14" y="659" font-size="12.2" fill="#444" font-family="Liberation Sans" text-anchor="middle">21</text>
<rect x="27" y="224" width="716" height="39" fill="#6fcf46" />
<rect x="27" y="264" width="110" height="300" fill="#ffc000" />
<rect x="137" y="224" width="1" height="340" fill="#000" />
<rect x="290" y="224" width="1" height="340" fill="#000" />
<rect x="443" y="224" width="1" height="340" fill="#000" />
<rect x="592" y="224" width="1" height="340" fill="#000" />
<rect x="742" y="224" width="1" height="340" fill="#000" />
<rect x="27" y="263" width="716" height="1" fill="#000" />
<rect x="27" y="283" width="716" height="1" fill="#000" />
<rect x="27" y="303" width="716" height="1" fill="#000" />
<rect x="27" y="323" width="716" height="1" fill="#000" />
<rect x="27" y="343" width="716" height="1" fill="#000" />
<rect x="27" y="363" width="716" height="1" fill="#000" />
<rect x="27" y="383" width="716" height="1" fill="#000" />
<rect x="27" y="403" width="716" height="1" fill="#000" />
<rect x="27" y="423" width="716" height="1" fill="#000" />
<rect x="27" y="443" width="716" height="1" fill="#000" />
<rect x="27" y="463" width="716" height="1" fill="#000" />
<rect x="27" y="483" width="716" height="1" fill="#000" />
<rect x="27" y="503" width="716" height="1" fill="#000" />
<rect x="27" y="523" width="716" height="1" fill="#000" />
<rect x="27" y="543" width="716" height="1" fill="#000" />
<rect x="27" y="563" width="716" height="1" fill="#000" />
<rect x="25" y="223" width="113" height="41" fill="#1e6b41" />
<rect x="27" y="224" width="110" height="39" fill="#fff" />
<rect x="28" y="225" width="108" height="37" fill="#6fcf46" />
<rect x="134" y="260" width="4" height="4" fill="#1e6b41" />
<rect x="133" y="259" width="5" height="5" fill="none" stroke="#fff" stroke-width="1" />
<rect x="135" y="261" width="3" height="3" fill="#1e6b41" />
<rect x="23.5" y="221.5" width="116" height="44" rx="2" ry="2" fill="none" stroke="#ff0000" stroke-width="3"/>
<text x="141.5" y="239" font-size="12.6" fill="#000" font-weight="normal" font-family="Liberation Sans" textLength="136.9" lengthAdjust="spacingAndGlyphs" stroke="#000" stroke-width="0.15" >Продажи по Торговой</text>
<text x="141.5" y="259" font-size="12.6" fill="#000" font-weight="normal" font-family="Liberation Sans" textLength="106.9" lengthAdjust="spacingAndGlyphs" stroke="#000" stroke-width="0.15" >точке 1, тыс. руб.</text>
<text x="293.5" y="239" font-size="12.6" fill="#000" font-weight="normal" font-family="Liberation Sans" textLength="137.1" lengthAdjust="spacingAndGlyphs" stroke="#000" stroke-width="0.15" >Продажи по Торговой</text>
<text x="293.5" y="259" font-size="12.6" fill="#000" font-weight="normal" font-family="Liberation Sans" textLength="107.1" lengthAdjust="spacingAndGlyphs" stroke="#000" stroke-width="0.15" >точке 2, тыс. руб.</text>
<text x="446.6" y="239" font-size="12.6" fill="#000" font-weight="normal" font-family="Liberation Sans" textLength="138.0" lengthAdjust="spacingAndGlyphs" stroke="#000" stroke-width="0.15" >Продажи по Торговой</text>
<text x="446.6" y="259" font-size="12.6" fill="#000" font-weight="normal" font-family="Liberation Sans" textLength="107.4" lengthAdjust="spacingAndGlyphs" stroke="#000" stroke-width="0.15" >точке 3, тыс. руб.</text>
<text x="595.5" y="239" font-size="12.6" fill="#000" font-weight="normal" font-family="Liberation Sans" textLength="137.7" lengthAdjust="spacingAndGlyphs" stroke="#000" stroke-width="0.15" >Продажи по Торговой</text>
<text x="595.5" y="259" font-size="12.6" fill="#000" font-weight="normal" font-family="Liberation Sans" textLength="107.5" lengthAdjust="spacingAndGlyphs" stroke="#000" stroke-width="0.15" >точке 4, тыс. руб.</text>
<text x="135.2" y="278.7" font-size="12.6" fill="#000" stroke="#000" stroke-width="0.18" font-family="Liberation Sans" text-anchor="end" textLength="63.4" lengthAdjust="spacingAndGlyphs">01.06.2019</text>
<text x="288.2" y="278.7" font-size="12.6" fill="#000" stroke="#000" stroke-width="0.18" font-family="Liberation Sans" text-anchor="end">25,223</text>
<text x="441.2" y="278.7" font-size="12.6" fill="#000" stroke="#000" stroke-width="0.18" font-family="Liberation Sans" text-anchor="end">33,224</text>
<text x="590.2" y="278.7" font-size="12.6" fill="#000" stroke="#000" stroke-width="0.18" font-family="Liberation Sans" text-anchor="end">14,557</text>
<text x="740.2" y="278.7" font-size="12.6" fill="#000" stroke="#000" stroke-width="0.18" font-family="Liberation Sans" text-anchor="end">24,334</text>
<text x="135.2" y="298.7" font-size="12.6" fill="#000" stroke="#000" stroke-width="0.18" font-family="Liberation Sans" text-anchor="end" textLength="63.4" lengthAdjust="spacingAndGlyphs">02.06.2019</text>
<text x="288.2" y="298.7" font-size="12.6" fill="#000" stroke="#000" stroke-width="0.18" font-family="Liberation Sans" text-anchor="end">25,475</text>
<text x="441.2" y="298.7" font-size="12.6" fill="#000" stroke="#000" stroke-width="0.18" font-family="Liberation Sans" text-anchor="end">33,722</text>
<text x="590.2" y="298.7" font-size="12.6" fill="#000" stroke="#000" stroke-width="0.18" font-family="Liberation Sans" text-anchor="end">14,673</text>
<text x="740.2" y="298.7" font-size="12.6" fill="#000" stroke="#000" stroke-width="0.18" font-family="Liberation Sans" text-anchor="end">24,456</text>
<text x="135.2" y="318.7" font-size="12.6" fill="#000" stroke="#000" stroke-width="0.18" font-family="Liberation Sans" text-anchor="end" textLength="63.4" lengthAdjust="spacingAndGlyphs">03.06.2019</text>
<text x="288.2" y="318.7" font-size="12.6" fill="#000" stroke="#000" stroke-width="0.18" font-family="Liberation Sans" text-anchor="end">25,73</text>
<text x="441.2" y="318.7" font-size="12.6" fill="#000" stroke="#000" stroke-width="0.18" font-family="Liberation Sans" text-anchor="end">34,228</text>
<text x="590.2" y="318.7" font-size="12.6" fill="#000" stroke="#000" stroke-width="0.18" font-family="Liberation Sans" text-anchor="end">14,791</text>
<text x="740.2" y="318.7" font-size="12.6" fill="#000" stroke="#000" stroke-width="0.18" font-family="Liberation Sans" text-anchor="end">24,578</text>
<text x="135.2" y="338.7" font-size="12.6" fill="#000" stroke="#000" stroke-width="0.18" font-family="Liberation Sans" text-anchor="end" textLength="63.4" lengthAdjust="spacingAndGlyphs">04.06.2019</text>
<text x="288.2" y="338.7" font-size="12.6" fill="#000" stroke="#000" stroke-width="0.18" font-family="Liberation Sans" text-anchor="end">25,987</text>
<text x="441.2" y="338.7" font-size="12.6" fill="#000" stroke="#000" stroke-width="0.18" font-family="Liberation Sans" text-anchor="end">34,742</text>
<text x="590.2" y="338.7" font-size="12.6" fill="#000" stroke="#000" stroke-width="0.18" font-family="Liberation Sans" text-anchor="end">14,909</text>
<text x="740.2" y="338.7" font-size="12.6" fill="#000" stroke="#000" stroke-width="0.18" font-family="Liberation Sans" text-anchor="end">24,701</text>
<text x="135.2" y="358.7" font-size="12.6" fill="#000" stroke="#000" stroke-width="0.18" font-family="Liberation Sans" text-anchor="end" textLength="63.4" lengthAdjust="spacingAndGlyphs">05.06.2019</text>
<text x="288.2" y="358.7" font-size="12.6" fill="#000" stroke="#000" stroke-width="0.18" font-family="Liberation Sans" text-anchor="end">26,247</text>
<text x="441.2" y="358.7" font-size="12.6" fill="#000" stroke="#000" stroke-width="0.18" font-family="Liberation Sans" text-anchor="end">35,263</text>
<text x="590.2" y="358.7" font-size="12.6" fill="#000" stroke="#000" stroke-width="0.18" font-family="Liberation Sans" text-anchor="end">15,028</text>
<text x="740.2" y="358.7" font-size="12.6" fill="#000" stroke="#000" stroke-width="0.18" font-family="Liberation Sans" text-anchor="end">24,824</text>
<text x="135.2" y="378.7" font-size="12.6" fill="#000" stroke="#000" stroke-width="0.18" font-family="Liberation Sans" text-anchor="end" textLength="63.4" lengthAdjust="spacingAndGlyphs">06.06.2019</text>
<text x="288.2" y="378.7" font-size="12.6" fill="#000" stroke="#000" stroke-width="0.18" font-family="Liberation Sans" text-anchor="end">26,51</text>
<text x="441.2" y="378.7" font-size="12.6" fill="#000" stroke="#000" stroke-width="0.18" font-family="Liberation Sans" text-anchor="end">35,792</text>
<text x="590.2" y="378.7" font-size="12.6" fill="#000" stroke="#000" stroke-width="0.18" font-family="Liberation Sans" text-anchor="end">15,149</text>
<text x="740.2" y="378.7" font-size="12.6" fill="#000" stroke="#000" stroke-width="0.18" font-family="Liberation Sans" text-anchor="end">24,948</text>
<text x="135.2" y="398.7" font-size="12.6" fill="#000" stroke="#000" stroke-width="0.18" font-family="Liberation Sans" text-anchor="end" textLength="63.4" lengthAdjust="spacingAndGlyphs">07.06.2019</text>
<text x="288.2" y="398.7" font-size="12.6" fill="#000" stroke="#000" stroke-width="0.18" font-family="Liberation Sans" text-anchor="end">26,775</text>
<text x="441.2" y="398.7" font-size="12.6" fill="#000" stroke="#000" stroke-width="0.18" font-family="Liberation Sans" text-anchor="end">36,329</text>
<text x="590.2" y="398.7" font-size="12.6" fill="#000" stroke="#000" stroke-width="0.18" font-family="Liberation Sans" text-anchor="end">15,27</text>
<text x="740.2" y="398.7" font-size="12.6" fill="#000" stroke="#000" stroke-width="0.18" font-family="Liberation Sans" text-anchor="end">25,073</text>
<text x="135.2" y="418.7" font-size="12.6" fill="#000" stroke="#000" stroke-width="0.18" font-family="Liberation Sans" text-anchor="end" textLength="63.4" lengthAdjust="spacingAndGlyphs">08.06.2019</text>
<text x="288.2" y="418.7" font-size="12.6" fill="#000" stroke="#000" stroke-width="0.18" font-family="Liberation Sans" text-anchor="end">27,042</text>
<text x="441.2" y="418.7" font-size="12.6" fill="#000" stroke="#000" stroke-width="0.18" font-family="Liberation Sans" text-anchor="end">36,873</text>
<text x="590.2" y="418.7" font-size="12.6" fill="#000" stroke="#000" stroke-width="0.18" font-family="Liberation Sans" text-anchor="end">15,392</text>
<text x="740.2" y="418.7" font-size="12.6" fill="#000" stroke="#000" stroke-width="0.18" font-family="Liberation Sans" text-anchor="end">25,199</text>
<text x="135.2" y="438.7" font-size="12.6" fill="#000" stroke="#000" stroke-width="0.18" font-family="Liberation Sans" text-anchor="end" textLength="63.4" lengthAdjust="spacingAndGlyphs">09.06.2019</text>
<text x="288.2" y="438.7" font-size="12.6" fill="#000" stroke="#000" stroke-width="0.18" font-family="Liberation Sans" text-anchor="end">27,313</text>
<text x="441.2" y="438.7" font-size="12.6" fill="#000" stroke="#000" stroke-width="0.18" font-family="Liberation Sans" text-anchor="end">37,427</text>
<text x="590.2" y="438.7" font-size="12.6" fill="#000" stroke="#000" stroke-width="0.18" font-family="Liberation Sans" text-anchor="end">15,515</text>
<text x="740.2" y="438.7" font-size="12.6" fill="#000" stroke="#000" stroke-width="0.18" font-family="Liberation Sans" text-anchor="end">25,325</text>
<text x="135.2" y="458.7" font-size="12.6" fill="#000" stroke="#000" stroke-width="0.18" font-family="Liberation Sans" text-anchor="end" textLength="63.4" lengthAdjust="spacingAndGlyphs">10.06.2019</text>
<text x="288.2" y="458.7" font-size="12.6" fill="#000" stroke="#000" stroke-width="0.18" font-family="Liberation Sans" text-anchor="end">27,586</text>
<text x="441.2" y="458.7" font-size="12.6" fill="#000" stroke="#000" stroke-width="0.18" font-family="Liberation Sans" text-anchor="end">37,988</text>
<text x="590.2" y="458.7" font-size="12.6" fill="#000" stroke="#000" stroke-width="0.18" font-family="Liberation Sans" text-anchor="end">15,639</text>
<text x="740.2" y="458.7" font-size="12.6" fill="#000" stroke="#000" stroke-width="0.18" font-family="Liberation Sans" text-anchor="end">25,451</text>
<text x="135.2" y="478.7" font-size="12.6" fill="#000" stroke="#000" stroke-width="0.18" font-family="Liberation Sans" text-anchor="end" textLength="63.4" lengthAdjust="spacingAndGlyphs">11.06.2019</text>
<text x="288.2" y="478.7" font-size="12.6" fill="#000" stroke="#000" stroke-width="0.18" font-family="Liberation Sans" text-anchor="end">27,862</text>
<text x="441.2" y="478.7" font-size="12.6" fill="#000" stroke="#000" stroke-width="0.18" font-family="Liberation Sans" text-anchor="end">38,558</text>
<text x="590.2" y="478.7" font-size="12.6" fill="#000" stroke="#000" stroke-width="0.18" font-family="Liberation Sans" text-anchor="end">15,764</text>
<text x="740.2" y="478.7" font-size="12.6" fill="#000" stroke="#000" stroke-width="0.18" font-family="Liberation Sans" text-anchor="end">25,578</text>
<text x="135.2" y="498.7" font-size="12.6" fill="#000" stroke="#000" stroke-width="0.18" font-family="Liberation Sans" text-anchor="end" textLength="63.4" lengthAdjust="spacingAndGlyphs">12.06.2019</text>
<text x="288.2" y="498.7" font-size="12.6" fill="#000" stroke="#000" stroke-width="0.18" font-family="Liberation Sans" text-anchor="end">28,141</text>
<text x="441.2" y="498.7" font-size="12.6" fill="#000" stroke="#000" stroke-width="0.18" font-family="Liberation Sans" text-anchor="end">39,136</text>
<text x="590.2" y="498.7" font-size="12.6" fill="#000" stroke="#000" stroke-width="0.18" font-family="Liberation Sans" text-anchor="end">15,891</text>
<text x="740.2" y="498.7" font-size="12.6" fill="#000" stroke="#000" stroke-width="0.18" font-family="Liberation Sans" text-anchor="end">25,706</text>
<text x="135.2" y="518.7" font-size="12.6" fill="#000" stroke="#000" stroke-width="0.18" font-family="Liberation Sans" text-anchor="end" textLength="63.4" lengthAdjust="spacingAndGlyphs">13.06.2019</text>
<text x="288.2" y="518.7" font-size="12.6" fill="#000" stroke="#000" stroke-width="0.18" font-family="Liberation Sans" text-anchor="end">28,422</text>
<text x="441.2" y="518.7" font-size="12.6" fill="#000" stroke="#000" stroke-width="0.18" font-family="Liberation Sans" text-anchor="end">39,723</text>
<text x="590.2" y="518.7" font-size="12.6" fill="#000" stroke="#000" stroke-width="0.18" font-family="Liberation Sans" text-anchor="end">16,018</text>
<text x="740.2" y="518.7" font-size="12.6" fill="#000" stroke="#000" stroke-width="0.18" font-family="Liberation Sans" text-anchor="end">25,835</text>
<text x="135.2" y="538.7" font-size="12.6" fill="#000" stroke="#000" stroke-width="0.18" font-family="Liberation Sans" text-anchor="end" textLength="63.4" lengthAdjust="spacingAndGlyphs">14.06.2019</text>
<text x="288.2" y="538.7" font-size="12.6" fill="#000" stroke="#000" stroke-width="0.18" font-family="Liberation Sans" text-anchor="end">28,706</text>
<text x="441.2" y="538.7" font-size="12.6" fill="#000" stroke="#000" stroke-width="0.18" font-family="Liberation Sans" text-anchor="end">40,319</text>
<text x="590.2" y="538.7" font-size="12.6" fill="#000" stroke="#000" stroke-width="0.18" font-family="Liberation Sans" text-anchor="end">16,146</text>
<text x="740.2" y="538.7" font-size="12.6" fill="#000" stroke="#000" stroke-width="0.18" font-family="Liberation Sans" text-anchor="end">25,964</text>
<text x="135.2" y="558.7" font-size="12.6" fill="#000" stroke="#000" stroke-width="0.18" font-family="Liberation Sans" text-anchor="end" textLength="63.4" lengthAdjust="spacingAndGlyphs">15.06.2019</text>
<text x="288.2" y="558.7" font-size="12.6" fill="#000" stroke="#000" stroke-width="0.18" font-family="Liberation Sans" text-anchor="end">28,993</text>
<text x="441.2" y="558.7" font-size="12.6" fill="#000" stroke="#000" stroke-width="0.18" font-family="Liberation Sans" text-anchor="end">40,924</text>
<text x="590.2" y="558.7" font-size="12.6" fill="#000" stroke="#000" stroke-width="0.18" font-family="Liberation Sans" text-anchor="end">16,275</text>
<text x="740.2" y="558.7" font-size="12.6" fill="#000" stroke="#000" stroke-width="0.18" font-family="Liberation Sans" text-anchor="end">26,094</text>
<rect x="1044" y="223" width="1" height="443" fill="#ababab" />
<rect x="1045" y="204" width="21" height="462" fill="#e6e6e6" />
<rect x="1048.5" y="206.5" width="14" height="14" fill="#fff" stroke="#ababab" stroke-width="1"/>
<path d="M1051.5,216 h8 l-4,-4 z" fill="#777"/>
<rect x="1048.5" y="221.5" width="14" height="408" fill="#fff" stroke="#ababab" stroke-width="1"/>
<rect x="1048" y="630" width="15" height="21" fill="url(#zig)"/>
<rect x="1048.5" y="651.5" width="14" height="14" fill="#fff" stroke="#ababab" stroke-width="1"/>
<path d="M1051.5,656.5 h8 l-4,4 z" fill="#777"/>
<rect x="1" y="665" width="1065" height="28" fill="#e6e6e6" />
<rect x="1" y="665" width="1044" height="1" fill="#ababab" />
<path d="M32,674.5 v8 l-4.5,-4 z" fill="#c0c0c0"/>
<path d="M56.5,674.5 v8 l4.5,-4 z" fill="#c0c0c0"/>
<rect x="101" y="665" width="107" height="23" fill="#fff" />
<rect x="101" y="665" width="1" height="23" fill="#c6c6c6" />
<rect x="207" y="665" width="1" height="23" fill="#c6c6c6" />
<rect x="101" y="688" width="107" height="2" fill="#03733e" />
<text x="113.4" y="683" font-size="13" fill="#03733e" font-weight="bold" font-family="Liberation Sans" textLength="82.1" lengthAdjust="spacingAndGlyphs" >microexcel.ru</text>
<circle cx="249" cy="679" r="7.3" fill="none" stroke="#666" stroke-width="1.1"/>
<path d="M245,679 h8 M249,675 v8" stroke="#666" stroke-width="1.4"/>
<rect x="640" y="674" width="2" height="2" fill="#a6a6a6" />
<rect x="640" y="678" width="2" height="2" fill="#a6a6a6" />
<rect x="640" y="682" width="2" height="2" fill="#a6a6a6" />
<rect x="657.5" y="672.5" width="14" height="14" fill="#fff" stroke="#ababab" stroke-width="1"/>
<rect x="672.5" y="672.5" width="317" height="14" fill="#fff" stroke="#ababab" stroke-width="1"/>
<path d="M666,676 v7 l-4,-3.5 z" fill="#555"/>
<rect x="990" y="672" width="40" height="15" fill="url(#zig)"/>
<rect x="1030.5" y="672.5" width="14" height="14" fill="#fff" stroke="#ababab" stroke-width="1"/>
<path d="M1036,676 v7 l4,-3.5 z" fill="#555"/>
<rect x="1" y="693" width="1065" height="22" fill="#f3f2f1" />
<rect x="1" y="693" width="1065" height="1" fill="#d6d6d6" />
<circle cx="12" cy="700" r="3" fill="#5a5a5a"/>
<rect x="16" y="698" width="6" height="2.5" fill="#5a5a5a" />
<path d="M10.5,704 v5.5 h11 v-9" fill="none" stroke="#5a5a5a" stroke-width="1"/>
<rect x="15" y="703" width="1.6" height="1" fill="#5a5a5a" />
<rect x="18" y="703" width="1.6" height="1" fill="#5a5a5a" />
<rect x="12.5" y="705" width="1.6" height="1" fill="#5a5a5a" />
<rect x="15.3" y="705" width="1.6" height="1" fill="#5a5a5a" />
<rect x="18.3" y="705" width="1.6" height="1" fill="#5a5a5a" />
<rect x="12.5" y="707" width="1.6" height="1" fill="#5a5a5a" />
<rect x="15.3" y="707" width="1.6" height="1" fill="#5a5a5a" />
<rect x="18.3" y="707" width="1.6" height="1" fill="#5a5a5a" />
<rect x="766" y="694" width="38" height="21" fill="#c6c6c6" />
<rect x="778.5" y="697.5" width="12" height="12" fill="none" stroke="#666" stroke-width="1"/>
<path d="M782.5,697.5 v12 M786.5,697.5 v12 M778.5,701.5 h12 M778.5,705.5 h12" stroke="#666" stroke-width="1"/>
<rect x="816.5" y="697.5" width="13" height="12" fill="none" stroke="#666" stroke-width="1.2"/>
<rect x="819.5" y="699.5" width="7" height="8" fill="none" stroke="#666" stroke-width="1"/>
<rect x="821" y="701" width="4" height="1" fill="#666" />
<rect x="821" y="703" width="4" height="1" fill="#666" />
<rect x="821" y="705" width="4" height="1" fill="#666" />
<rect x="854.5" y="697.5" width="13" height="12" fill="none" stroke="#666" stroke-width="1.2"/>
<path d="M858.5,697.5 v6.5 h-4 M862.5,697.5 v6.5 h-4" fill="none" stroke="#666" stroke-width="1"/>
<rect x="885" y="703" width="6" height="1.6" fill="#444" />
<rect x="896" y="703" width="99" height="1" fill="#999" />
<rect x="943" y="698" width="5" height="11" fill="#666" />
<path d="M998.5,703.5 h7 M1002,700 v7" stroke="#444" stroke-width="1.6"/>
<text x="1017.2" y="707.5" font-size="12.2" fill="#444" font-weight="normal" font-family="Liberation Sans" textLength="29.3" lengthAdjust="spacingAndGlyphs" xml:space="preserve">100 %</text>
<rect x="1048.5" y="651.5" width="14" height="14" fill="#fff" stroke="#ababab" stroke-width="1"/>
<path d="M1051.5,656.5 h8 l-4,4 z" fill="#777"/>
<rect x="1" y="65" width="1" height="650" fill="#f4f1f1" />
<rect x="0" y="65" width="1" height="651" fill="#03733e" />
<rect x="1066" y="65" width="1" height="651" fill="#03733e" />
<rect x="0" y="715" width="1067" height="1" fill="#03733e" />
</svg></body></html>
